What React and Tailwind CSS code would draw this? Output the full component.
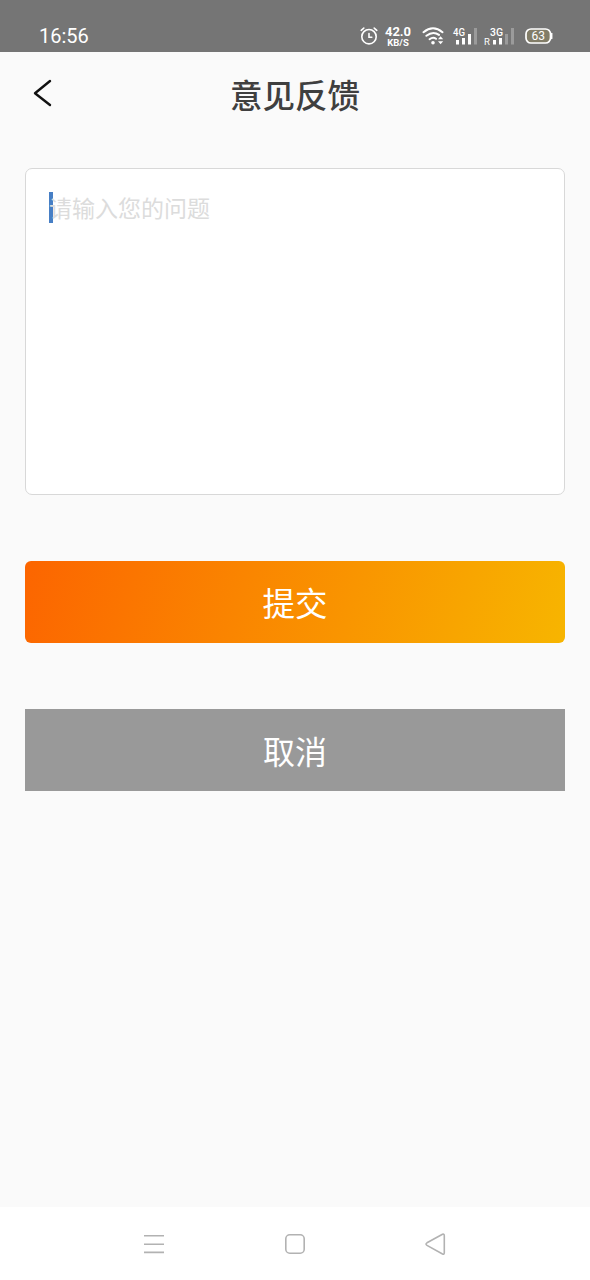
const AlarmIcon = () => (
  <svg className="w-[18px] h-5" viewBox="0 0 18 20" fill="none" stroke="white" strokeWidth="1.6" strokeLinecap="round">
    <circle cx="9" cy="10.7" r="7.2" />
    <path d="M9 7.5v3.7h2.8M1.2 4.3l2.6-2.2M16.8 4.3l-2.6-2.2" />
  </svg>
);

const WifiIcon = () => (
  <svg className="w-[22px] h-5" viewBox="0 0 22 20" fill="none" stroke="white" strokeWidth="2" strokeLinecap="round">
    <path d="M1.5 6.2Q11 -1.6 20.5 6.2M4.4 9.8Q11 4.6 17 8.9M7.6 13.2Q11 10.6 14 12.8" />
    <circle cx="11" cy="16.8" r="1.8" fill="white" stroke="none" />
    <path d="M16 13.3l2.6-3 2.6 3zM16 15.2l2.6 3 2.6-3z" fill="white" stroke="none" />
  </svg>
);

const SignalIcon = ({ network, roaming, bars }) => (
  <svg className="w-8 h-5" viewBox="0 0 32 20" fill="white" fontFamily="Roboto, sans-serif">
    <text x={roaming ? 7 : 1} y="10" fontSize="11" fontWeight="500" textLength={roaming ? 13 : 12} lengthAdjust="spacingAndGlyphs">
      {network}
    </text>
    {roaming && <text x="1" y="19" fontSize="9.5">R</text>}
    {bars.map((bar) => (
      <rect key={bar.x} x={bar.x} y={bar.y} width="3" height={18.5 - bar.y} opacity={bar.on ? 1 : 0.28} />
    ))}
  </svg>
);

const mainBars = [
  { x: 4, y: 14, on: true },
  { x: 10, y: 12, on: true },
  { x: 16, y: 8, on: true },
  { x: 22, y: 2, on: false }
];

const roamingBars = [
  { x: 10, y: 14, on: true },
  { x: 16, y: 12, on: true },
  { x: 22, y: 8, on: false },
  { x: 28, y: 2, on: false }
];

const BatteryIcon = ({ level }) => (
  <svg className="w-7 h-5" viewBox="0 0 28 20">
    <rect x="1" y="3" width="24.5" height="14" rx="5" fill="#827d68" stroke="white" strokeWidth="1.7" />
    <path d="M26.7 7.5v5" stroke="white" strokeWidth="1.5" strokeLinecap="round" />
    <text x="13.2" y="14.3" fontSize="12" textAnchor="middle" fill="white" fontFamily="Roboto, sans-serif">
      {level}
    </text>
  </svg>
);

const StatusBar = () => (
  <div className="h-[52px] shrink-0 bg-[#757575] text-white flex justify-between pt-[26px] pl-[39px] pr-[37px] font-[Roboto,sans-serif]">
    <span className="text-[20px] leading-[21px]">16:56</span>
    <div className="flex h-5">
      <AlarmIcon />
      <div className="w-[28px] ml-[6px] text-center font-bold">
        <div className="text-[13px] leading-[12px]">42.0</div>
        <div className="text-[9.5px] leading-[9px]">KB/S</div>
      </div>
      <div className="ml-[10px]"><WifiIcon /></div>
      <div className="ml-2"><SignalIcon network="4G" bars={mainBars} /></div>
      <div className="-ml-px"><SignalIcon network="3G" roaming bars={roamingBars} /></div>
      <div className="ml-[10px]"><BatteryIcon level="63" /></div>
    </div>
  </div>
);

const Header = () => (
  <header className="h-[86px] shrink-0 grid grid-cols-[1fr_auto_1fr] items-center pl-[33px] pr-[33px]">
    <button type="button" aria-label="返回" className="justify-self-start">
      <svg className="w-5 h-7 mb-1" viewBox="0 0 20 28" fill="none" stroke="#111111" strokeWidth="2.4" strokeLinecap="round" strokeLinejoin="round">
        <path d="M17 2L2 14.2L17 26" />
      </svg>
    </button>
    <h1 className="pt-1 text-[32.5px] leading-10 font-medium text-[#3f3f3f]">意见反馈</h1>
  </header>
);

const NavBar = () => (
  <nav className="h-[73px] shrink-0 bg-white flex items-center justify-between px-[142px]">
    <svg className="w-6 h-6" viewBox="0 0 24 24" fill="none" stroke="#b2b2b2" strokeWidth="1.6">
      <path d="M2 3.8h20M2 12.2h20M2 20.4h20" />
    </svg>
    <svg className="w-6 h-6" viewBox="0 0 24 24" fill="none" stroke="#b2b2b2" strokeWidth="1.6">
      <rect x="2.8" y="2.8" width="18.4" height="18.4" rx="4" />
    </svg>
    <svg className="w-6 h-6" viewBox="0 0 24 24" fill="none" stroke="#b2b2b2" strokeWidth="1.6">
      <path d="M18.5 2.3L3 10.8q-2 1.3 0 2.6l15.5 8.6q1.8.7 1.8-1.4V3.7q0-2.1-1.8-1.4z" />
    </svg>
  </nav>
);

export default function App() {
  return (
    <div className="h-screen flex flex-col bg-[#fafafa] font-[Roboto,'Noto_Sans_CJK_SC',sans-serif]">
      <StatusBar />
      <Header />
      <main className="flex-1 px-[25px] pt-[30px]">
        <div className="h-[327px] rounded-[7px] bg-white border border-[#d8d8d8] pt-[23px] pl-[23px] flex items-start">
          <span className="w-1 h-[31px] bg-[#477fc5]" />
          <span className="-ml-1 pt-0.5 text-[23px] leading-8 text-[#dcdcdc]">请输入您的问题</span>
        </div>
        <button
          type="button"
          className="mt-[66px] block w-full h-[82px] pt-1.5 rounded-md bg-[linear-gradient(105deg,#fc6500,#f7b500)] text-white text-[32.5px] leading-10"
        >
          提交
        </button>
        <button type="button" className="mt-[66px] block w-full h-[82px] pt-1.5 bg-[#999999] text-white text-[32px] leading-10">
          取消
        </button>
      </main>
      <NavBar />
    </div>
  );
}
